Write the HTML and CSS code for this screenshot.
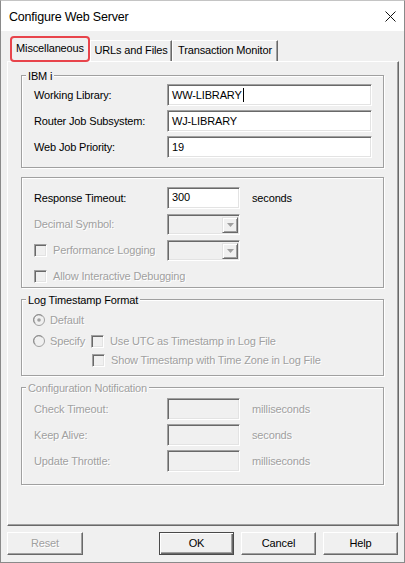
FILE: index.html
```html
<!DOCTYPE html>
<html>
<head>
<meta charset="utf-8">
<link rel="stylesheet" href="styles.css">
</head>
<body>
<div class="window">
  <div class="titlebar">
    <span class="title">Configure Web Server</span>
    <svg class="close" width="11" height="11" viewBox="0 0 11 11"><path d="M0.5 0.5 L10.5 10.5 M10.5 0.5 L0.5 10.5" stroke="#111" stroke-width="1" fill="none"/></svg>
  </div>
  <div class="body">
    <div class="tabs">
      <div class="tab active">Miscellaneous</div>
      <div class="tab t2">URLs and Files</div>
      <div class="tab t3">Transaction Monitor</div>
    </div>
    <div class="panel">
      <div class="group g1">
        <div class="group-title">IBM i</div>
        <div class="form ibm">
          <span class="lbl">Working Library:</span><div class="input wide">WW-LIBRARY<span class="caret"></span></div>
          <span class="lbl">Router Job Subsystem:</span><div class="input wide">WJ-LIBRARY</div>
          <span class="lbl">Web Job Priority:</span><div class="input wide">19</div>
        </div>
      </div>

      <div class="group g2">
        <div class="form misc">
          <span class="lbl">Response Timeout:</span><div class="input short top">300</div><span class="unit">seconds</span>
          <span class="lbl dis">Decimal Symbol:</span><div class="combo"><span class="drop"><svg width="7" height="4" viewBox="0 0 7 4"><path d="M0 0 H7 L3.5 4 Z" fill="#a0a0a0"/></svg></span></div><span></span>
          <span class="lbl dis chk"><span class="box"></span>Performance Logging</span><div class="combo"><span class="drop"><svg width="7" height="4" viewBox="0 0 7 4"><path d="M0 0 H7 L3.5 4 Z" fill="#a0a0a0"/></svg></span></div><span></span>
          <span class="lbl dis chk span3"><span class="box"></span>Allow Interactive Debugging</span>
        </div>
      </div>

      <div class="group g3">
        <div class="group-title">Log Timestamp Format</div>
        <div class="opt r1 dis"><span class="radio"><svg width="12" height="12" viewBox="0 0 12 12"><circle cx="6" cy="6" r="5.5" fill="#f0f0f0" stroke="#a0a0a0"/><path d="M2.2 9.2 A4.6 4.6 0 0 1 9.2 2.2" stroke="#8a8a8a" fill="none"/><circle cx="6" cy="6" r="1.8" fill="#a0a0a0"/></svg></span>Default</div>
        <div class="opt r2 dis"><span class="radio"><svg width="12" height="12" viewBox="0 0 12 12"><circle cx="6" cy="6" r="5.5" fill="#f0f0f0" stroke="#a0a0a0"/><path d="M2.2 9.2 A4.6 4.6 0 0 1 9.2 2.2" stroke="#8a8a8a" fill="none"/></svg></span><span class="spec">Specify</span><span class="box"></span>Use UTC as Timestamp in Log File</div>
        <div class="opt r3 dis"><span class="box"></span>Show Timestamp with Time Zone in Log File</div>
      </div>

      <div class="group g4">
        <div class="group-title dis">Configuration Notification</div>
        <div class="form notif">
          <span class="lbl dis">Check Timeout:</span><div class="input short disabled"></div><span class="unit dis">milliseconds</span>
          <span class="lbl dis">Keep Alive:</span><div class="input short disabled"></div><span class="unit dis">seconds</span>
          <span class="lbl dis">Update Throttle:</span><div class="input short disabled"></div><span class="unit dis">milliseconds</span>
        </div>
      </div>
    </div>
    <div class="buttons">
      <div class="btn reset dis">Reset</div>
      <div class="btn ok">OK</div>
      <div class="btn">Cancel</div>
      <div class="btn">Help</div>
    </div>
  </div>
</div>
</body>
</html>
```
FILE: styles.css
```css
* { box-sizing: border-box; }
html, body { margin: 0; padding: 0; }
body {
  width: 405px;
  height: 563px;
  font-family: "Liberation Sans", Arial, sans-serif;
  font-size: 11px;
  letter-spacing: -0.15px;
  color: #000;
  background: #fff;
}
.window {
  width: 405px;
  height: 563px;
  border: 1px solid #8a8a8a;
  border-top-color: #c4c4c4;
  display: flex;
  flex-direction: column;
  background: #f0f0f0;
}
.titlebar {
  height: 30px;
  flex: none;
  background: #fff;
  display: flex;
  align-items: center;
  justify-content: space-between;
  padding: 0 8px 0 8px;
}
.title {
  font-size: 12.5px;
  letter-spacing: -0.2px;
  color: #000;
  padding-top: 1px;
}
.close { display: block; margin-right: 0; }
.body {
  flex: 1;
  padding: 5px 0 0 6px;
  display: flex;
  flex-direction: column;
}
.tabs {
  height: 25px;
  display: flex;
  align-items: flex-end;
  margin-left: 3px;
  position: relative;
  z-index: 1;
}
.tab {
  height: 21px;
  line-height: 17px;
  text-align: center;
  border-top: 1px solid #fff;
  border-left: 1px solid #fff;
  border-right: 1px solid #696969;
  box-shadow: inset -1px 0 0 #a0a0a0;
  background: #f0f0f0;
  padding-top: 1px;
}
.tab.active {
  width: 80px;
  height: 26px;
  margin-bottom: -1px;
  border: 2px solid #e8444b;
  border-radius: 4px;
  box-shadow: none;
  line-height: 18px;
  padding-top: 1px;
}
.t2 { width: 82px; }
.t3 { width: 106px; margin-left: 0; }
.panel {
  width: 392px;
  height: 465px;
  border: 1px solid;
  border-color: #fff #696969 #696969 #fff;
  box-shadow: inset -1px -1px 0 #a0a0a0;
  padding: 0 0 0 13px;
  display: flex;
  flex-direction: column;
}
.group {
  width: 363px;
  border: 1px solid #a0a0a0;
  box-shadow: inset 1px 1px 0 #fff, 1px 1px 0 #fff;
  padding-left: 12px;
}
.group-title {
  width: fit-content;
  line-height: 13px;
  margin: -6px 0 0 -8px;
  padding: 0 2px;
  background: #f0f0f0;
}
.g1 { margin-top: 13px; padding-bottom: 9px; }
.g2 { margin-top: 9px; padding-top: 9px; padding-bottom: 0; }
.g3 { margin-top: 11px; padding-bottom: 6px; }
.g4 { margin-top: 11px; padding-bottom: 12px; }
.form {
  display: grid;
  grid-template-columns: 133px 73px auto;
  grid-auto-rows: 22px;
  row-gap: 4px;
  align-items: center;
}
.form.ibm { grid-template-columns: 133px 205px; margin-top: 1px; }
.form.notif { margin-top: 3px; }
.lbl { white-space: nowrap; }
.dis { color: #a0a0a0; text-shadow: 1px 1px 0 #fff; }
.unit { padding-left: 12px; white-space: nowrap; }
.span3 { grid-column: 1 / 4; }
.input {
  height: 22px;
  background: #fff;
  border: 1px solid;
  border-color: #a0a0a0 #fff #fff #a0a0a0;
  box-shadow: inset 1px 1px 0 #696969, inset -1px -1px 0 #e3e3e3;
  padding: 0 4px;
  line-height: 20px;
  display: flex;
  align-items: center;
  white-space: nowrap;
}
.input.top { align-items: flex-start; padding-top: 1px; line-height: 16px; }
.input.disabled { background: #f0f0f0; }
.caret {
  display: inline-block;
  width: 1px;
  height: 14px;
  background: #000;
  margin-left: 1px;
}
.combo {
  height: 21px;
  width: 73px;
  background: #f0f0f0;
  border: 1px solid;
  border-color: #a0a0a0 #fff #fff #a0a0a0;
  box-shadow: inset 1px 1px 0 #696969, inset -1px -1px 0 #e3e3e3;
  display: flex;
  justify-content: flex-end;
  padding: 2px 1px 1px 2px;
}
.drop {
  width: 16px;
  height: 100%;
  border: 1px solid;
  border-color: #e3e3e3 #696969 #696969 #e3e3e3;
  box-shadow: inset 1px 1px 0 #fff, inset -1px -1px 0 #a0a0a0;
  display: flex;
  align-items: center;
  justify-content: center;
  padding-left: 1px;
}
.chk { display: flex; align-items: center; }
.box {
  width: 13px;
  height: 13px;
  flex: none;
  background: #f0f0f0;
  border: 1px solid;
  border-color: #a0a0a0 #fff #fff #a0a0a0;
  box-shadow: inset 1px 1px 0 #696969, inset -1px -1px 0 #e3e3e3;
  margin-right: 6px;
  display: inline-block;
}
.opt {
  height: 18px;
  display: flex;
  align-items: center;
  white-space: nowrap;
}
.opt.r1 { margin-top: 4px; }
.opt.r2 { margin-top: 3px; }
.opt.r3 { margin-top: 1px; padding-left: 58px; }
.radio { width: 12px; height: 12px; margin-left: -1px; margin-right: 5px; display: flex; }
.radio svg { display: block; }
.spec { width: 41px; }
.buttons {
  margin-top: 6px;
  width: 391px;
  display: flex;
  gap: 7px;
}
.btn {
  width: 75px;
  height: 23px;
  border: 1px solid;
  border-color: #fff #696969 #696969 #fff;
  box-shadow: inset -1px -1px 0 #a0a0a0;
  display: flex;
  align-items: center;
  justify-content: center;
  padding-bottom: 1px;
}
.btn.reset { width: 76px; margin-right: auto; }
.btn.ok {
  border: 1px solid #4a4a4a;
  box-shadow: inset 1px 1px 0 #fff, inset -1px -1px 0 #696969, inset -2px -2px 0 #a0a0a0;
}
```
